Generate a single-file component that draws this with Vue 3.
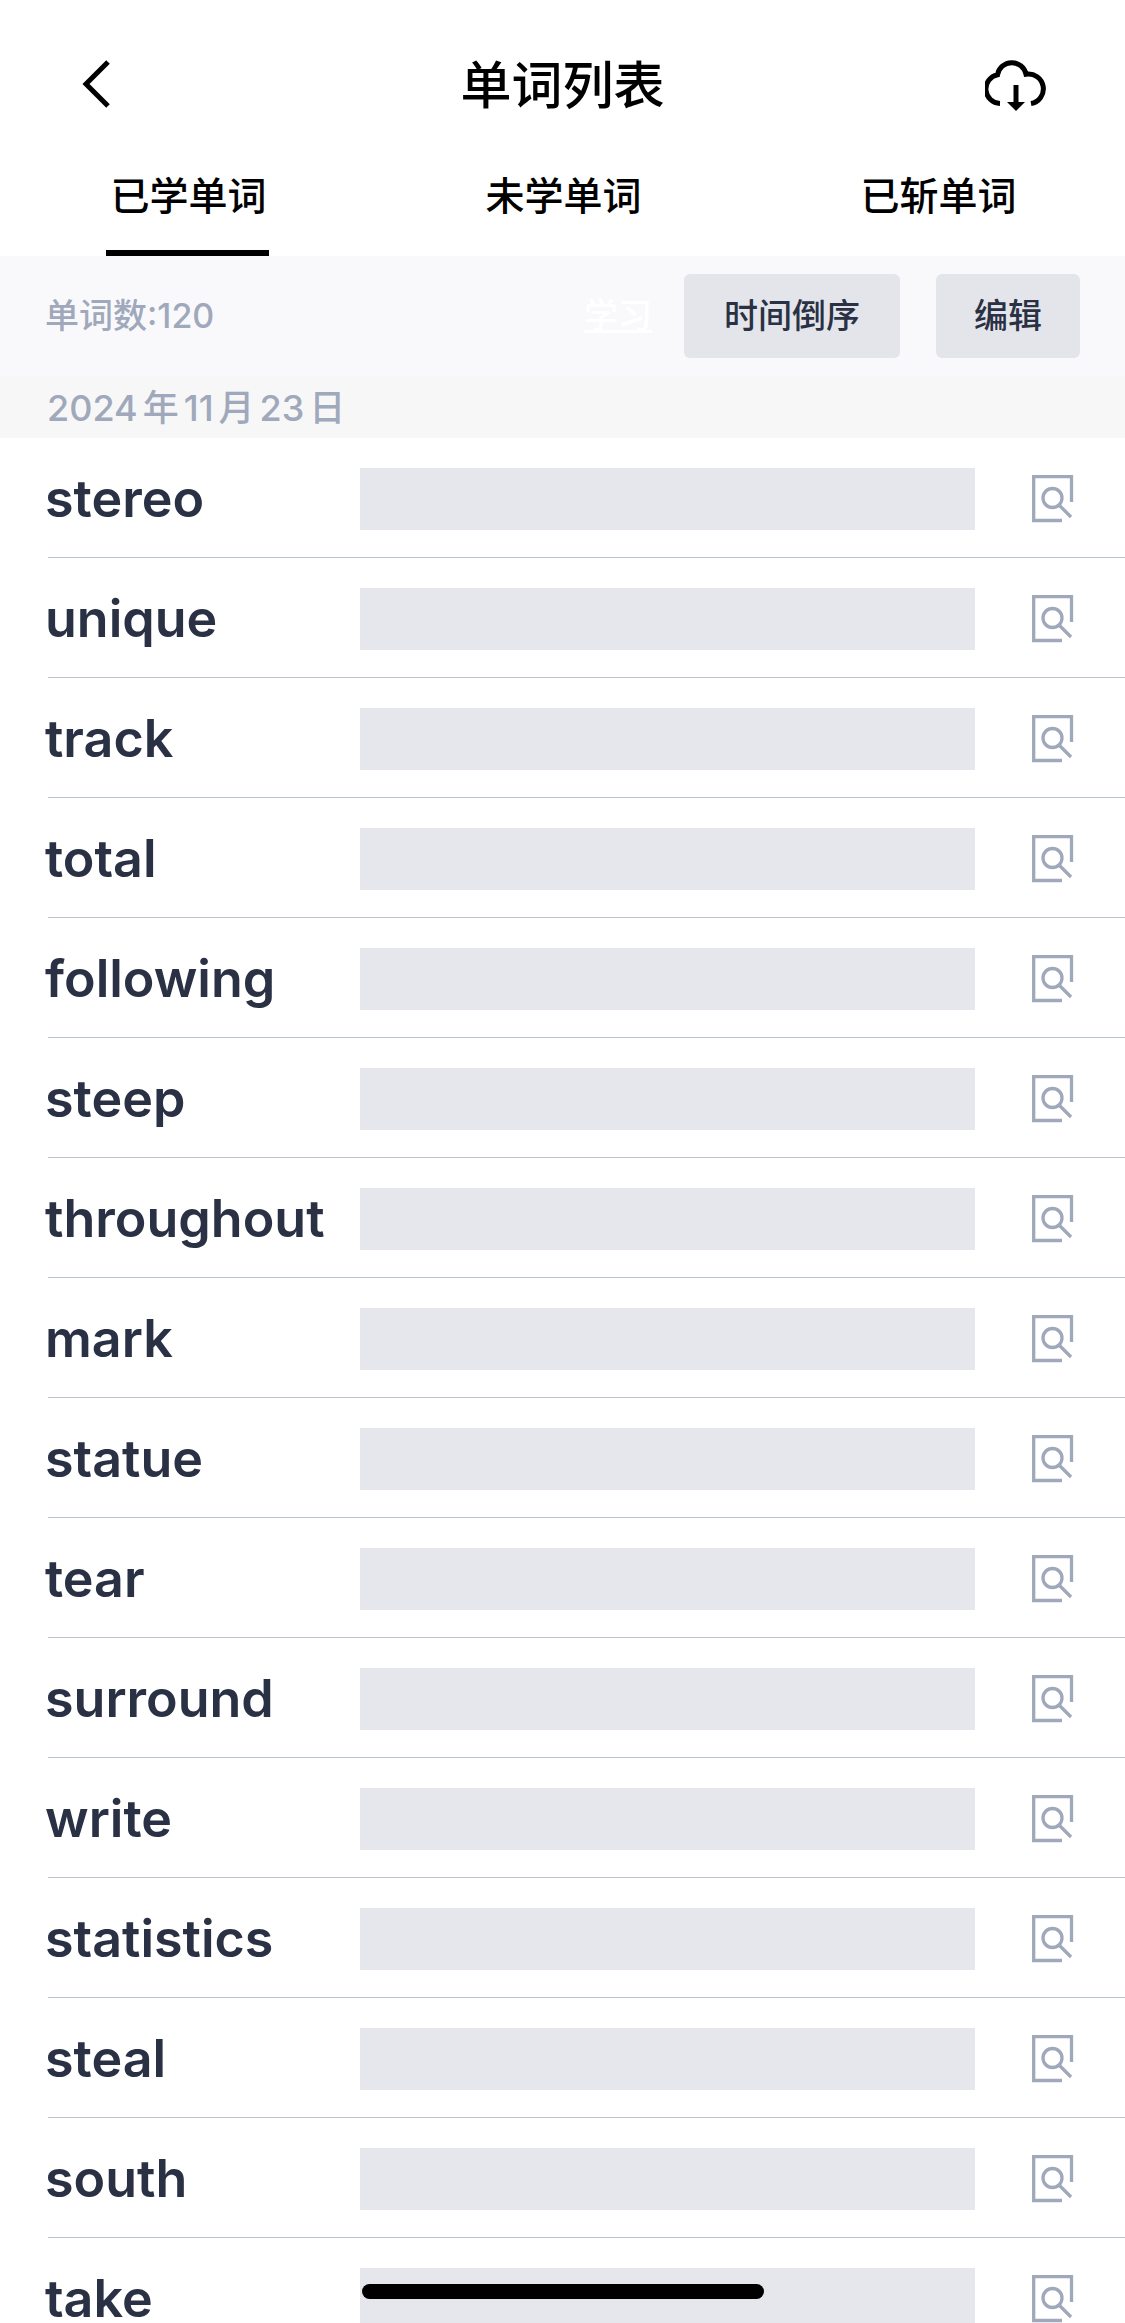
<script setup>
import { ref } from 'vue'

const tabs = ['已学单词', '未学单词', '已斩单词']
const activeTab = ref(0)
const words = [
  'stereo', 'unique', 'track', 'total', 'following', 'steep', 'throughout', 'mark',
  'statue', 'tear', 'surround', 'write', 'statistics', 'steal', 'south', 'take',
]
</script>

<template>
  <div class="screen">
    <header class="header">
      <button class="icon-button back" aria-label="返回">
        <svg width="30" height="48" viewBox="0 0 30 48" fill="none" stroke="#000" stroke-width="5">
          <path d="M26 2 4 24 26 46" />
        </svg>
      </button>
      <h1 class="title">单词列表</h1>
      <button class="icon-button" aria-label="下载">
        <svg width="62" height="54" viewBox="0 0 62 54" fill="none" stroke="#000" stroke-width="5">
          <path d="M15 46.500A14.500 14.500 0 0 1 12.500 17.800A14.500 14.500 0 0 1 41 17.200A14.500 14.500 0 0 1 46 46.500" />
          <path d="M31 28V46" />
          <path d="M22 45H40L31 54Z" fill="#000" stroke="none" />
        </svg>
      </button>
    </header>

    <nav class="tabs">
      <button
        v-for="(tab, i) in tabs"
        :key="tab"
        class="tab"
        :class="{ active: i === activeTab }"
        @click="activeTab = i"
      >
        <span class="tab-label">{{ tab }}</span>
      </button>
    </nav>

    <div class="toolbar">
      <span class="count">单词数:120</span>
      <a class="study" href="#">学习</a>
      <button class="chip sort">时间倒序</button>
      <button class="chip edit">编辑</button>
    </div>

    <main class="content">
      <h2 class="date">
        <span>2024</span><span>年</span><span>11</span><span>月</span><span>23</span><span>日</span>
      </h2>
      <ul class="list">
        <li v-for="word in words" :key="word" class="row">
          <span class="word">{{ word }}</span>
          <button class="mask" aria-label="显示释义"></button>
          <button class="lookup" aria-label="查词">
            <svg width="42" height="48" viewBox="0 0 42 48" fill="none" stroke="#a0a8bb" stroke-width="3.300">
              <path d="M39.500 27V1.700H1.700V45.500H30" />
              <circle cx="20.500" cy="23" r="9.500" />
              <path d="M27 30 39 42" />
            </svg>
          </button>
        </li>
      </ul>
    </main>

    <div class="home-indicator"></div>
  </div>
</template>

<style>
body {
  margin: 0;
}
</style>

<style scoped>
.screen {
  display: flex;
  flex-direction: column;
  height: 100vh;
  overflow: hidden;
  background: #fff;
  color: #2a3144;
  font-family: Inter, "Noto Sans CJK SC", sans-serif;
  font-weight: 500;
}

button {
  margin: 0;
  padding: 0;
  border: 0;
  background: none;
  color: inherit;
  font: inherit;
  cursor: pointer;
}

svg {
  display: block;
}

.header {
  flex: none;
  display: flex;
  align-items: center;
  justify-content: space-between;
  height: 168px;
  padding: 0 78px;
  box-sizing: border-box;
  color: #000;
}

.icon-button {
  display: flex;
  width: 62px;
}

.back {
  box-sizing: border-box;
  padding-left: 4px;
}

.title {
  margin: 0;
  padding-top: 4px;
  font-size: 51px;
  font-weight: 500;
  line-height: 72px;
}

.tabs {
  flex: none;
  display: flex;
  height: 88px;
  color: #000;
}

.tab {
  flex: 1;
  display: flex;
  justify-content: center;
  font-size: 39px;
  line-height: 56px;
}

.tab-label {
  box-sizing: border-box;
  height: 88px;
  padding: 0 2px 0 4px;
  border-bottom: 6px solid transparent;
}

.active .tab-label {
  border-color: #000;
}

.toolbar {
  flex: none;
  display: flex;
  align-items: center;
  height: 120px;
  padding: 0 45px;
  background: #f9f9fc;
  font-size: 34px;
  line-height: 48px;
}

.count {
  margin-right: auto;
  color: #a0a8bb;
}

.study {
  margin-right: 32px;
  color: #fff;
}

.chip {
  height: 84px;
  border-radius: 6px;
  background: #e4e5ea;
}

.sort {
  width: 216px;
  margin-right: 36px;
}

.edit {
  width: 144px;
}

.content {
  flex: 1;
  min-height: 0;
  overflow: hidden;
}

.date {
  display: flex;
  gap: 5px;
  box-sizing: border-box;
  height: 62px;
  margin: 0;
  padding: 2px 47px 0;
  background: #f7f7f7;
  color: #a0a8bb;
  font-size: 36px;
  font-weight: 500;
  line-height: 60px;
}

.list {
  margin: 0;
  padding: 0 0 0 48px;
  list-style: none;
}

.row {
  display: flex;
  align-items: center;
  height: 120px;
  padding-top: 3px;
  box-sizing: border-box;
  border-bottom: 1px solid #bcc3d0;
}

.word {
  width: 315px;
  margin-left: -3px;
  font-size: 52px;
  font-weight: 600;
  line-height: 72px;
}

.mask {
  flex: 1;
  height: 62px;
  background: #e6e7ec;
}

.lookup {
  margin: 0 51px 0 57px;
}

.home-indicator {
  position: fixed;
  bottom: 24px;
  left: 50%;
  width: 402px;
  height: 15px;
  border-radius: 8px;
  background: #000;
  transform: translateX(-50%);
}
</style>
